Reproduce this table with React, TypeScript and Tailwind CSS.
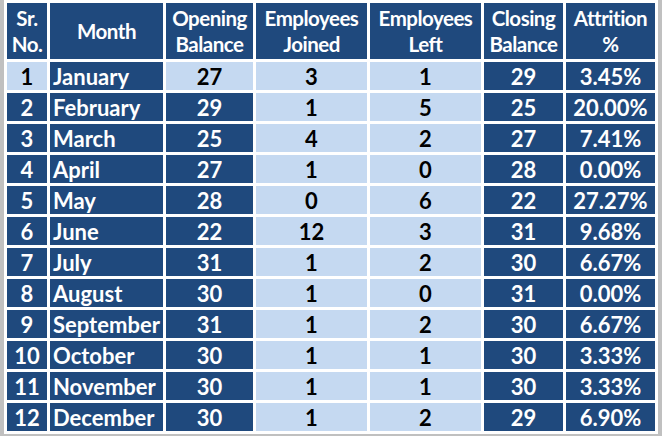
const rows = [
  ['1', 'January', '27', '3', '1', '29', '3.45%'],
  ['2', 'February', '29', '1', '5', '25', '20.00%'],
  ['3', 'March', '25', '4', '2', '27', '7.41%'],
  ['4', 'April', '27', '1', '0', '28', '0.00%'],
  ['5', 'May', '28', '0', '6', '22', '27.27%'],
  ['6', 'June', '22', '12', '3', '31', '9.68%'],
  ['7', 'July', '31', '1', '2', '30', '6.67%'],
  ['8', 'August', '30', '1', '0', '31', '0.00%'],
  ['9', 'September', '31', '1', '2', '30', '6.67%'],
  ['10', 'October', '30', '1', '1', '30', '3.33%'],
  ['11', 'November', '30', '1', '1', '30', '3.33%'],
  ['12', 'December', '30', '1', '2', '29', '6.90%'],
];

const headers = [
  ['Sr.', 'No.'],
  ['Month'],
  ['Opening', 'Balance'],
  ['Employees', 'Joined'],
  ['Employees', 'Left'],
  ['Closing', 'Balance'],
  ['Attrition', '%'],
];

const dark = 'bg-[#1f497d] text-white';
const light = 'bg-[#c5d9f1] text-black';

// light cells: joined/left always, sr + opening only on first row
const isLight = (r: number, c: number) => c === 3 || c === 4 || (r === 0 && (c === 0 || c === 2));

export default function App() {
  return (
    <div
      className="w-[662px] h-[436px] border-x-4 border-b-[2px] border-[#c0c0c0] bg-white p-[3px] overflow-hidden"
      style={{ fontFamily: 'Lato, "Open Sans", sans-serif' }}
    >
      <div className="grid grid-cols-[40px_113px_87px_111px_111px_79px_89px] gap-[3px] font-bold">
        {headers.map((h, i) => (
          <div
            key={i}
            className={`${dark} h-[56px] flex flex-col items-center justify-center text-[20.5px] leading-[26px] text-center tracking-[-0.5px] whitespace-nowrap`}
          >
            {h.map((line) => (
              <span key={line}>{line}</span>
            ))}
          </div>
        ))}
        {rows.map((row, r) =>
          row.map((cell, c) => (
            <div
              key={`${r}-${c}`}
              className={`${isLight(r, c) ? light : dark} h-[28px] flex items-center pt-[1px] text-[22px] leading-none ${
                c === 1 ? 'justify-start pl-[3px]' : 'justify-center'
              }`}
            >
              {cell}
            </div>
          ))
        )}
      </div>
    </div>
  );
}
